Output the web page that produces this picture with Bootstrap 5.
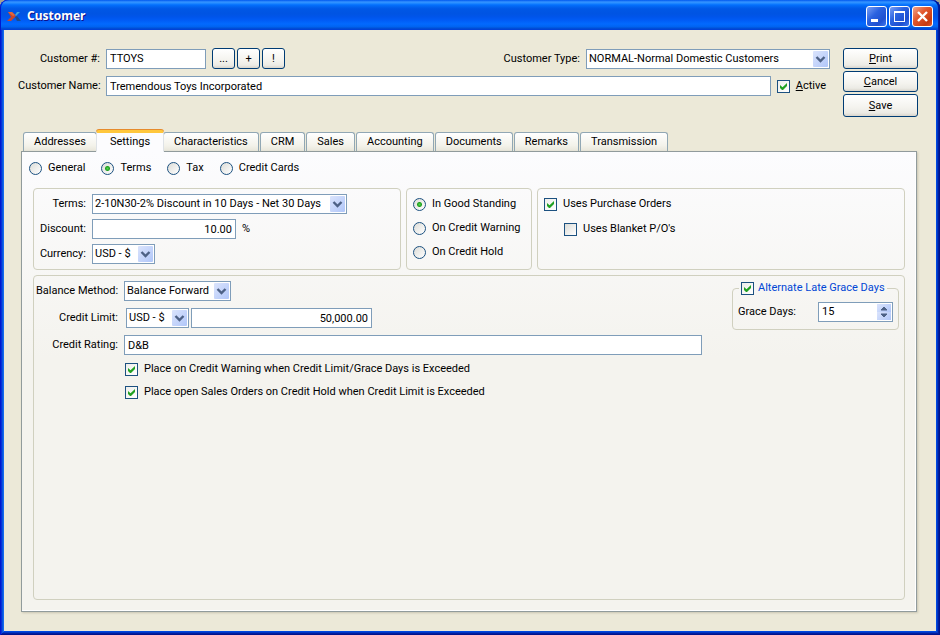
<!DOCTYPE html>
<html lang="en">
<head>
<meta charset="utf-8">
<meta name="viewport" content="width=device-width, initial-scale=1">
<title>Customer</title>
<link href="https://cdn.jsdelivr.net/npm/bootstrap@5.3.0/dist/css/bootstrap.min.css" rel="stylesheet">
<style>
  :root { --edge: #7f9db9; --navy: #003c74; --group: #d0d0bf; --tab: #919b9c; }
  body { font-family: Roboto, "Liberation Sans", sans-serif; font-size: 11px; line-height: 14px; color: #000; background: #a5a292; }
  .xp-window { background: #ece9d8; padding: 0 4px 4px; border-radius: 8px 8px 0 0;
    box-shadow: inset 1px 0 #0019cf, inset -1px -1px #00138c, inset 2px 0 #0831d9, inset -2px -2px #001ea0, inset 3px 0 #0855dd, inset -3px -3px #0036c4, inset 4px 0 #166aee, inset -4px -4px #0048e0; }
  .xp-title { height: 30px; margin: 0 -4px; padding: 2px 7px 0 7px; border-radius: 8px 8px 0 0; color: #fff;
    background: linear-gradient(180deg, #0058ee 0, #3593ff 2px, #288eff 3px, #127dff 4px, #036ffc 5px, #0262ee 7px, #0057e5 9px, #0054e3 14px, #0055eb 17px, #005bf5 20px, #026afe 24px, #0062ef 27px, #0052d6 28px, #003dd7 30px);
    box-shadow: inset 1px 0 #0019cf, inset -1px 0 #00138c, inset -2px 0 #001ea0; }
  .xp-title h1 { font-family: "Noto Sans", sans-serif; font-size: 12px; line-height: 16px; font-weight: 700; text-shadow: 1px 1px #0f1089; margin-left: 6px; }
  .cap-btn { width: 21px; height: 21px; padding: 0; border: 1px solid #fff; border-radius: 3px; background: linear-gradient(135deg, #7a9ff5, #2a62e0 40%, #1f4fd0 75%, #3e78f0); display: flex; }
  .cap-btn.cap-close { background: linear-gradient(135deg, #f0a58c, #e2572e 40%, #c83a10 80%, #dc5a35); }
  .xp-header { padding: 18px 18px 0 14px; gap: 13px; }
  .xp-field, .xp-select { height: 20px; padding: 0 3px; font-size: 11px; line-height: 18px; color: #000; background-color: #fff; border: 1px solid var(--edge); border-radius: 0; }
  .xp-select { padding: 0 16px 0 2px; min-height: 0; background-repeat: no-repeat; background-position: right 1px center; background-size: 15px 16px;
    background-image: url("data:image/svg+xml,%3Csvg xmlns='http://www.w3.org/2000/svg' viewBox='0 0 15 16'%3E%3Cdefs%3E%3ClinearGradient id='g' x2='1' y2='1'%3E%3Cstop stop-color='%23dbe4fc'/%3E%3Cstop offset='1' stop-color='%23b0c6f9'/%3E%3C/linearGradient%3E%3C/defs%3E%3Crect width='15' height='16' rx='1' fill='url(%23g)'/%3E%3Cpath d='M3.5 6l4 4 4-4' fill='none' stroke='%234d6185' stroke-width='2.4'/%3E%3C/svg%3E"); }
  .xp-btn { padding: 0; height: 21px; font-size: 11px; line-height: 19px; color: #000; border: 1px solid var(--navy); border-radius: 3px; background: linear-gradient(#fff, #f4f3ee 60%, #ecebe5 85%, #d9d5cc); }
  .xp-btn.btn-tool { width: 23px; }
  .xp-btn.btn-save { height: 23px; line-height: 21px; }
  .xp-actions { width: 75px; gap: 2px; }
  .xp-check { display: flex; align-items: center; gap: 6px; min-height: 0; margin: 0; padding: 0; }
  .xp-check .form-check-input { float: none; flex: none; width: 13px; height: 13px; margin: 0; border: 1px solid #1c5180; background: linear-gradient(135deg, #dcdcd7, #fff); }
  .xp-check .form-check-input[type=checkbox] { border-radius: 0; }
  .xp-check .form-check-input[type=checkbox]:checked { background: url("data:image/svg+xml,%3Csvg xmlns='http://www.w3.org/2000/svg' viewBox='0 0 11 11'%3E%3Cpath d='M2 4v3l2 2h1l4-4V2L4.500 6.300z' fill='%2321a121'/%3E%3C/svg%3E") center / 11px 11px, linear-gradient(135deg, #eeeeea, #fff); }
  .xp-check .form-check-input[type=radio]:checked { background: radial-gradient(circle at center, #55d551 0, #21a121 2px, transparent 3px), linear-gradient(135deg, #dcdcd7, #fff); }
  .w-name, .lbl-terms, .lbl-bal { flex: none; text-align: right; white-space: nowrap; }
  .w-name { width: 82px; } .w-code { width: 100px; } .w-type { width: 244px; }
  .w-terms { width: 255px; } .w-disc { width: 144px; } .w-cur { width: 63px; }
  .w-bal { width: 107px; } .w-limit { width: 181px; }
  .lbl-terms { width: 48px; } .lbl-bal { width: 82px; }
  .gap-2px { gap: 2px; } .gap-6px { gap: 6px; } .gap-7px { gap: 7px; }
  .xp-tabs { margin: 13px 0 0 19px; padding-left: 0; border: 0; height: 21px; align-items: flex-end; gap: 1px; }
  .xp-tabs .nav-link { height: 20px; padding: 0 10px; font-size: 11px; line-height: 18px; color: #000; background: linear-gradient(#fff, #f3f2ea 70%, #e8e6da); border: 1px solid #91a7b4; border-bottom-color: var(--tab); border-radius: 3px 3px 0 0; margin: 0; }
  .xp-tabs .nav-link.active { height: 22px; padding: 0 13px; color: #000; background: #fcfcfe; border-top: 3px solid #ffc73c; border-bottom-color: #fcfcfe; box-shadow: 0 -1px #e68b2c; position: relative; margin: 0 -2px; }
  .xp-panel { margin: 0 19px 19px 17px; padding: 9px 11px 11px; border: 1px solid var(--tab); background: linear-gradient(#fcfcfe, #f4f3ee 45%, #f4f3ee); box-shadow: inset -1px -1px #fff, 1px 1px 2px #c9c5b2; }
  .xp-modes { gap: 16px; margin-left: -4px; height: 14px; margin-bottom: 13px; }
  .xp-group { border: 1px solid var(--group); border-radius: 4px; padding: 5px; min-width: 0; }
  .xp-row { gap: 5px; margin-bottom: 5px; }
  .xp-terms { gap: 5px; padding: 5px 8px 5px 4px; }
  .xp-status { width: 126px; gap: 10px; padding: 8px 0 8px 6px; }
  .xp-orders { padding: 8px 6px; gap: 11px; }
  .xp-orders .sub-option { margin-left: 20px; }
  .xp-main { padding: 5px 5px 5px 2px; }
  .xp-holds { gap: 9px; padding-left: 89px; }
  .xp-split { gap: 30px; }
  .xp-limit { margin-left: 2px; }
  .xp-grace { width: 167px; margin-top: 0; padding: 0 5px 7px; align-self: flex-start; }
  .xp-grace legend { width: auto; float: none; font-size: 11px; line-height: 14px; color: #0046d5; margin: 0 0 0 1px; padding: 0 2px; white-space: nowrap; }
  .xp-grace legend .xp-check { gap: 4px; }
  .xp-grace-row { padding-top: 7px; }
  .xp-spin { width: 75px; height: 20px; border: 1px solid var(--edge); background: #fff; padding: 1px; }
  .xp-spin input { min-width: 0; width: 100%; border: 0; padding: 0 2px; font-size: 11px; line-height: 16px; appearance: textfield; -moz-appearance: textfield; }
  .xp-spin input::-webkit-inner-spin-button { display: none; }
  .xp-spin button { width: 14px; height: 8px; padding: 0; border: 0; background: linear-gradient(135deg, #dbe4fc, #b0c6f9); display: flex; }
</style>
</head>
<body>
<main class="xp-window d-flex flex-column min-vh-100">
  <header class="xp-title d-flex align-items-center">
    <svg width="14" height="11" viewBox="0 0 14 11" aria-hidden="true"><path d="M1 1h4l4 4-2 2-3 3H0l4-4z" fill="#c8452c"/><path d="M1 1h4l3 3-2 1z" fill="#e2673a"/><path d="M8 4l2-3h3l-4 4z" fill="#3fa6dc"/><path d="M8 6l2-1 4 5h-4z" fill="#1c4a8c"/></svg>
    <h1 class="mb-0 me-auto">Customer</h1>
    <div class="d-flex gap-2px">
      <button class="cap-btn" type="button" aria-label="Minimize"><svg width="19" height="19"><path d="M4 12h7v3H4z" fill="#fff"/></svg></button>
      <button class="cap-btn" type="button" aria-label="Maximize"><svg width="19" height="19"><path d="M4 4h11v11H4zM5 6v8h9V6z" fill="#fff" fill-rule="evenodd"/></svg></button>
      <button class="cap-btn cap-close" type="button" aria-label="Close"><svg width="19" height="19"><path d="M5 5l9 9M14 5l-9 9" stroke="#fff" stroke-width="2.400"/></svg></button>
    </div>
  </header>

  <form class="d-flex flex-column flex-grow-1">
    <section class="xp-header d-flex">
      <div class="flex-grow-1 d-flex flex-column gap-7px">
        <div class="d-flex align-items-center gap-6px">
          <label class="w-name" for="code">Customer #:</label>
          <input class="form-control xp-field w-code" id="code" type="text" value="TTOYS">
          <div class="d-flex gap-2px">
            <button class="btn xp-btn btn-tool" type="button">...</button>
            <button class="btn xp-btn btn-tool" type="button">+</button>
            <button class="btn xp-btn btn-tool" type="button">!</button>
          </div>
          <label class="ms-auto" for="ctype">Customer Type:</label>
          <select class="form-select xp-select w-type" id="ctype"><option>NORMAL-Normal Domestic Customers</option></select>
        </div>
        <div class="d-flex align-items-center gap-6px">
          <label class="w-name" for="cname">Customer Name:</label>
          <input class="form-control xp-field flex-fill w-auto" id="cname" type="text" value="Tremendous Toys Incorporated">
          <div class="form-check xp-check me-1"><input class="form-check-input" type="checkbox" id="active" checked><label for="active"><u>A</u>ctive</label></div>
        </div>
      </div>
      <div class="xp-actions d-flex flex-column">
        <button class="btn xp-btn" type="button"><u>P</u>rint</button>
        <button class="btn xp-btn" type="button"><u>C</u>ancel</button>
        <button class="btn xp-btn btn-save" type="button"><u>S</u>ave</button>
      </div>
    </section>

    <ul class="nav nav-tabs xp-tabs" role="tablist">
      <li class="nav-item"><button class="nav-link" type="button" role="tab">Addresses</button></li>
      <li class="nav-item"><button class="nav-link active" type="button" role="tab" aria-selected="true">Settings</button></li>
      <li class="nav-item"><button class="nav-link" type="button" role="tab">Characteristics</button></li>
      <li class="nav-item"><button class="nav-link" type="button" role="tab">CRM</button></li>
      <li class="nav-item"><button class="nav-link" type="button" role="tab">Sales</button></li>
      <li class="nav-item"><button class="nav-link" type="button" role="tab">Accounting</button></li>
      <li class="nav-item"><button class="nav-link" type="button" role="tab">Documents</button></li>
      <li class="nav-item"><button class="nav-link" type="button" role="tab">Remarks</button></li>
      <li class="nav-item"><button class="nav-link" type="button" role="tab">Transmission</button></li>
    </ul>

    <section class="xp-panel d-flex flex-column flex-grow-1" role="tabpanel">
      <div class="xp-modes d-flex">
        <div class="form-check xp-check"><input class="form-check-input" type="radio" name="mode" id="m1"><label for="m1">General</label></div>
        <div class="form-check xp-check"><input class="form-check-input" type="radio" name="mode" id="m2" checked><label for="m2">Terms</label></div>
        <div class="form-check xp-check"><input class="form-check-input" type="radio" name="mode" id="m3"><label for="m3">Tax</label></div>
        <div class="form-check xp-check"><input class="form-check-input" type="radio" name="mode" id="m4"><label for="m4">Credit Cards</label></div>
      </div>

      <div class="xp-row d-flex">
        <div class="xp-group xp-terms col d-flex flex-column">
          <div class="d-flex align-items-center gap-6px"><label class="lbl-terms" for="terms">Terms:</label><select class="form-select xp-select w-terms" id="terms"><option>2-10N30-2% Discount in 10 Days - Net 30 Days</option></select></div>
          <div class="d-flex align-items-center gap-6px"><label class="lbl-terms" for="disc">Discount:</label><input class="form-control xp-field w-disc text-end" id="disc" type="text" value="10.00"><span>%</span></div>
          <div class="d-flex align-items-center gap-6px"><label class="lbl-terms" for="cur">Currency:</label><select class="form-select xp-select w-cur" id="cur"><option>USD - $</option></select></div>
        </div>
        <div class="xp-group xp-status d-flex flex-column">
          <div class="form-check xp-check"><input class="form-check-input" type="radio" name="standing" id="s1" checked><label for="s1">In Good Standing</label></div>
          <div class="form-check xp-check"><input class="form-check-input" type="radio" name="standing" id="s2"><label for="s2">On Credit Warning</label></div>
          <div class="form-check xp-check"><input class="form-check-input" type="radio" name="standing" id="s3"><label for="s3">On Credit Hold</label></div>
        </div>
        <div class="xp-group xp-orders col d-flex flex-column">
          <div class="form-check xp-check"><input class="form-check-input" type="checkbox" id="po" checked><label for="po">Uses Purchase Orders</label></div>
          <div class="form-check xp-check sub-option"><input class="form-check-input" type="checkbox" id="bpo"><label for="bpo">Uses Blanket P/O's</label></div>
        </div>
      </div>

      <div class="xp-group xp-main flex-grow-1">
        <div class="xp-split d-flex">
          <div class="flex-grow-1 d-flex flex-column gap-7px">
            <div class="d-flex align-items-center gap-6px"><label class="lbl-bal" for="bal">Balance Method:</label><select class="form-select xp-select w-bal" id="bal"><option>Balance Forward</option></select></div>
            <div class="d-flex align-items-center gap-6px"><label class="lbl-bal" for="limit">Credit Limit:</label>
              <div class="xp-limit d-flex gap-2px"><select class="form-select xp-select w-cur" aria-label="Credit limit currency"><option>USD - $</option></select><input class="form-control xp-field w-limit text-end" id="limit" type="text" value="50,000.00"></div></div>
            <div class="d-flex align-items-center gap-6px"><label class="lbl-bal" for="rating">Credit Rating:</label><input class="form-control xp-field flex-fill w-auto" id="rating" type="text" value="D&amp;B"></div>
            <div class="xp-holds d-flex flex-column">
              <div class="form-check xp-check"><input class="form-check-input" type="checkbox" id="h1" checked><label for="h1">Place on Credit Warning when Credit Limit/Grace Days is Exceeded</label></div>
              <div class="form-check xp-check"><input class="form-check-input" type="checkbox" id="h2" checked><label for="h2">Place open Sales Orders on Credit Hold when Credit Limit is Exceeded</label></div>
            </div>
          </div>
          <fieldset class="xp-group xp-grace">
            <legend><span class="form-check xp-check"><input class="form-check-input" type="checkbox" id="alt" checked><label for="alt">Alternate Late Grace Days</label></span></legend>
            <div class="xp-grace-row d-flex align-items-center justify-content-between"><label for="grace">Grace Days:</label>
              <div class="xp-spin d-flex"><input id="grace" type="number" value="15">
                <div><button type="button" aria-label="Increase" tabindex="-1"><svg width="14" height="8"><path d="M4 6l3-3 3 3z" fill="#4d6185" stroke="#4d6185"/></svg></button><button type="button" aria-label="Decrease" tabindex="-1"><svg width="14" height="8"><path d="M4 2l3 3 3-3z" fill="#4d6185" stroke="#4d6185"/></svg></button></div>
              </div></div>
          </fieldset>
        </div>
      </div>
    </section>
  </form>
</main>
<script src="https://cdn.jsdelivr.net/npm/bootstrap@5.3.0/dist/js/bootstrap.bundle.min.js"></script>
</body>
</html>
